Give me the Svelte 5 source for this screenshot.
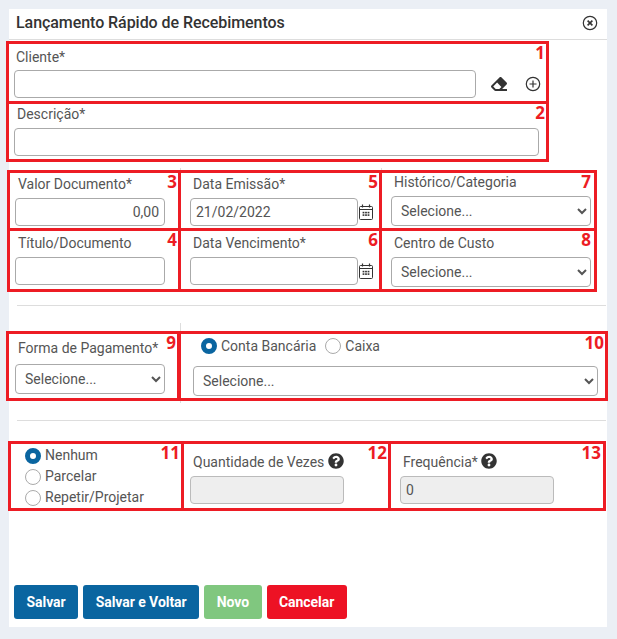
<script>
	const eraser = 'M497.941 273.941c18.745-18.745 18.745-49.137 0-67.882l-160-160c-18.745-18.745-49.137-18.745-67.882 0l-256 256c-18.745 18.745-18.745 49.137 0 67.882l96 96A48.004 48.004 0 0 0 144 480h356c6.627 0 12-5.373 12-12v-40c0-6.627-5.373-12-12-12H355.883l142.058-142.059zm-302.627-62.627l137.373 137.373L265.373 416H150.628l-80-80 124.686-124.686z';
	const help = 'M504 256c0 136.997-111.043 248-248 248S8 392.997 8 256C8 119.083 119.043 8 256 8s248 111.083 248 248zM262.655 90c-54.497 0-89.255 22.957-116.549 63.758-3.536 5.286-2.353 12.415 2.715 16.258l34.699 26.31c5.205 3.947 12.621 3.008 16.665-2.122 17.864-22.658 30.113-35.797 57.303-35.797 20.429 0 45.698 13.148 45.698 32.958 0 14.976-12.363 22.667-32.534 33.976C247.128 238.528 216 254.941 216 296v4c0 6.627 5.373 12 12 12h56c6.627 0 12-5.373 12-12v-1.333c0-28.462 83.186-29.647 83.186-106.667 0-58.002-60.165-102-116.531-102zM256 338c-25.365 0-46 20.635-46 46 0 25.364 20.635 46 46 46s46-20.636 46-46c0-25.365-20.635-46-46-46z';
	const dots = [[4.5, 8], [7, 8], [9.5, 8], [4.5, 10.5], [7, 10.5], [9.5, 10.5]];
</script>

{#snippet calendar()}
	<svg class="cal" viewBox="0 0 14 16" width="14" height="16">
		<rect x="0.5" y="2.5" width="13" height="13" rx="1" fill="none" stroke="#333" stroke-width="1" />
		<path d="M1 5.5h12" stroke="#333" stroke-width="1" fill="none" />
		<path d="M3.5 0.5v3M10.5 0.5v3" stroke="#333" stroke-width="1.2" fill="none" />
		{#each dots as [x, y]}
			<rect x={x - 0.9} y={y - 0.2} width="1.8" height="1.6" fill="#333" />
		{/each}
	</svg>
{/snippet}

{#snippet helpIcon()}
	<svg class="help" viewBox="0 0 512 512" width="16" height="16"><path d={help} fill="#333" /></svg>
{/snippet}

<div class="panel">
	<header>
		<h1>Lançamento Rápido de Recebimentos</h1>
		<svg class="close" viewBox="0 0 16 16" width="16" height="16">
			<circle cx="8" cy="8" r="6.7" fill="none" stroke="#333" stroke-width="1.2" />
			<path d="M5.6 5.6l4.8 4.8M10.4 5.6l-4.8 4.8" stroke="#333" stroke-width="1.6" fill="none" />
		</svg>
	</header>

	<section class="stack">
		<div class="cell c1">
			<label for="cliente">Cliente*</label>
			<div class="inline">
				<input id="cliente" class="w462" />
				<svg class="eraser" viewBox="0 0 512 512" width="16" height="16"><path d={eraser} fill="#333" /></svg>
				<svg class="plus" viewBox="0 0 16 16" width="16" height="16">
					<circle cx="8" cy="8" r="6.7" fill="none" stroke="#333" stroke-width="1.2" />
					<path d="M8 4.5v7M4.5 8h7" stroke="#333" stroke-width="1.2" fill="none" />
				</svg>
			</div>
			<span class="num">1</span>
		</div>
		<div class="cell c2">
			<label for="descricao">Descrição*</label>
			<input id="descricao" class="w525" />
			<span class="num">2</span>
		</div>
	</section>

	<section class="grid docs">
		<div class="cell a ruled">
			<label for="valor">Valor Documento*</label>
			<input id="valor" class="w150 money" value="0,00" />
			<span class="num">3</span>
		</div>
		<div class="cell b ruled">
			<label for="emissao">Data Emissão*</label>
			<div class="inline"><input id="emissao" class="w168" value="21/02/2022" />{@render calendar()}</div>
			<span class="num">5</span>
		</div>
		<div class="cell c">
			<label for="historico">Histórico/Categoria</label>
			<select id="historico" class="w200"><option>Selecione...</option></select>
			<span class="num far">7</span>
		</div>
		<div class="cell a low">
			<label for="titulo">Título/Documento</label>
			<input id="titulo" class="w150" />
			<span class="num">4</span>
		</div>
		<div class="cell b low">
			<label for="vencimento">Data Vencimento*</label>
			<div class="inline"><input id="vencimento" class="w168" />{@render calendar()}</div>
			<span class="num">6</span>
		</div>
		<div class="cell c low">
			<label for="centro">Centro de Custo</label>
			<select id="centro" class="w200"><option>Selecione...</option></select>
			<span class="num far">8</span>
		</div>
	</section>

	<hr class="first" />

	<section class="grid pay">
		<div class="cell d ruled tall">
			<label for="forma">Forma de Pagamento*</label>
			<select id="forma" class="w150"><option>Selecione...</option></select>
			<span class="num">9</span>
		</div>
		<div class="cell e">
			<div class="radios">
				<label class="radio"><input type="radio" name="conta" checked />Conta Bancária</label>
				<label class="radio"><input type="radio" name="conta" />Caixa</label>
			</div>
			<select class="w405" aria-label="Conta"><option>Selecione...</option></select>
			<span class="num">10</span>
		</div>
	</section>

	<hr class="second" />

	<section class="grid repeat">
		<div class="cell f">
			<label class="radio"><input type="radio" name="rep" checked />Nenhum</label>
			<label class="radio"><input type="radio" name="rep" />Parcelar</label>
			<label class="radio"><input type="radio" name="rep" />Repetir/Projetar</label>
			<span class="num">11</span>
		</div>
		<div class="cell g">
			<label for="qtd">Quantidade de Vezes {@render helpIcon()}</label>
			<input id="qtd" class="w154" disabled />
			<span class="num">12</span>
		</div>
		<div class="cell h">
			<label for="freq">Frequência* {@render helpIcon()}</label>
			<input id="freq" class="w154" disabled value="0" />
			<span class="num in">13</span>
		</div>
	</section>

	<footer>
		<button class="blue">Salvar</button>
		<button class="blue">Salvar e Voltar</button>
		<button class="green">Novo</button>
		<button class="red">Cancelar</button>
	</footer>
</div>

<style>
	:global(html), :global(body) { background: #ebeff5; }
	:global(body) { font-family: Roboto, "Liberation Sans", sans-serif; }

	.panel {
		position: relative;
		isolation: isolate;
		box-sizing: border-box;
		display: flex;
		flex-direction: column;
		width: 598px;
		height: 618px;
		margin: 9px 0 12px 9px;
		background: #fff;
		color: #555;
		font-size: 14px;
	}

	header {
		box-sizing: border-box;
		display: flex;
		align-items: center;
		justify-content: space-between;
		height: 31px;
		padding: 0 9px 3px 7px;
		border-bottom: 1px solid #ddd;
	}
	h1 { margin: 0; font-size: 16px; font-weight: 500; letter-spacing: -0.06px; color: #333; }

	.cell {
		position: relative;
		box-sizing: border-box;
		border: 3px solid #ed1c24;
	}
	.num {
		position: absolute;
		top: -1px;
		right: 1px;
		font: 700 17px/20px "Open Sans", sans-serif;
		color: #ed1c24;
	}
	.num.in { right: 2px; }
	.num.far { right: 3px; }

	.cell > label:not(.radio), .cell > .radios { display: block; height: 20px; line-height: 20px; }
	input:not([type='radio']), select {
		display: block;
		box-sizing: border-box;
		height: 28px;
		padding: 0 5px;
		border: 1px solid #aaa;
		border-radius: 4px;
		background: #fff;
		color: #555;
		font: 14px Roboto, sans-serif;
	}
	select { height: 30px; }
	input:disabled { background: #eee; border-color: #bbb; }
	.money { text-align: right; }
	.inline { display: flex; align-items: center; }

	.w150 { width: 150px; }
	.w154 { width: 154px; }
	.w168 { width: 168px; }
	.w200 { width: 200px; }
	.w405 { width: 405px; }
	.w462 { width: 462px; }
	.w525 { width: 525px; }

	.eraser { margin-left: 15px; }
	.plus { margin-left: 18px; }
	.cal { margin-left: 1px; }
	.help { vertical-align: -2px; }

	.stack { margin: 1px 0 0 -3px; }
	.c1 { width: 543px; height: 63px; padding: 3px 0 0 5px; }
	.c1 label { margin: 0 0 3px 2px; }
	.c2 { width: 543px; height: 61px; margin-top: -3px; padding: 0 0 0 5px; }
	.c2 label { margin: 0 0 4px 3px; }

	.grid { display: grid; }
	.cell.ruled::before {
		content: '';
		position: absolute;
		top: -5px;
		right: -3px;
		bottom: 0;
		width: 1px;
		background: #ddd;
		z-index: -1;
	}
	.cell.tall::before { top: -11px; right: -4px; bottom: -5px; }

	.docs {
		grid-template-columns: 174px 201px 215px;
		grid-template-rows: 61px 61px;
		margin: 8px 0 0 -2px;
	}
	.docs .b, .docs .c { margin-left: -3px; }
	.docs .low { margin-top: -3px; }
	.a { padding: 1px 0 0 5px; }
	.a label { margin: 0 0 4px 3px; }
	.b { padding: 1px 0 0 9px; }
	.b label { margin: 0 0 4px 3px; }
	.c { padding: 0 0 0 9px; }
	.c label { margin: 0 0 5px 3px; height: 18px !important; line-height: 18px !important; }
	.a.low, .b.low, .c.low { padding-top: 2px; }
	.c.low label { margin-bottom: 4px; height: 20px !important; line-height: 20px !important; }

	hr { height: 1px; margin: 0 1px 0 8px; border: 0; background: #ddd; }
	.first { margin-top: 13px; }
	.second { margin-top: 19px; }

	.pay {
		grid-template-columns: 174px 428px;
		grid-template-rows: 70px;
		margin: 25px 0 0 -3px;
	}
	.d { padding: 4px 0 0 6px; }
	.d label { margin: 0 0 6px 3px; }
	.e { margin-left: -2px; padding: 2px 0 0 12px; }
	.radios { display: flex !important; gap: 9px; margin: 0 0 10px 8px; }

	.radio { display: flex; align-items: center; gap: 4px; height: 20px; line-height: 20px; }
	input[type='radio'] {
		appearance: none;
		box-sizing: border-box;
		width: 16px;
		height: 16px;
		margin: 0;
		border: 1px solid #aaa;
		border-radius: 50%;
		background: #fff;
	}
	input[type='radio']:checked { border: 5px solid #0a65a0; }

	.repeat {
		grid-template-columns: 176px 207px 215px;
		grid-template-rows: 70px;
		margin: 20px 0 0 -1px;
	}
	.f { padding: 1px 0 0 14px; }
	.f .radio { height: 21px; line-height: 21px; }
	.g { margin-left: -3px; padding: 8px 0 0 6px; }
	.h { margin-left: -3px; padding: 8px 0 0 9px; }
	.g label, .h label { margin: 0 0 4px 3px; }

	footer {
		display: flex;
		gap: 5px;
		margin-top: auto;
		padding: 0 0 8px 5px;
	}
	button {
		height: 34px;
		padding: 0 12.5px;
		border: 0;
		border-radius: 3px;
		color: #fff;
		font: 700 14px Roboto, sans-serif;
		letter-spacing: -0.05px;
	}
	.blue { background: #0a65a0; }
	.green { background: #80c77f; }
	.red { background: #ed1224; }
</style>
